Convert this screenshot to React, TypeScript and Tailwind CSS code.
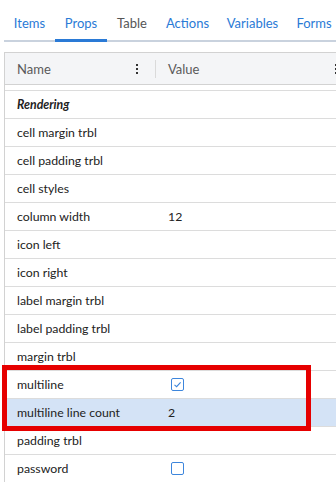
import React from "react";

const rows: { name: string; value?: string; check?: boolean; checked?: boolean; bold?: boolean; selected?: boolean }[] = [
  { name: "Rendering", bold: true },
  { name: "cell margin trbl" },
  { name: "cell padding trbl" },
  { name: "cell styles" },
  { name: "column width", value: "12" },
  { name: "icon left" },
  { name: "icon right" },
  { name: "label margin trbl" },
  { name: "label padding trbl" },
  { name: "margin trbl" },
  { name: "multiline", check: true, checked: true },
  { name: "multiline line count", value: "2", selected: true },
  { name: "padding trbl" },
  { name: "password", check: true, checked: false },
];

const tabs: { label: string; w: string }[] = [
  { label: "Items", w: "w-[51px]" },
  { label: "Props", w: "w-[52px]" },
  { label: "Table", w: "w-[50px]" },
  { label: "Actions", w: "w-[61px]" },
  { label: "Variables", w: "w-[69px]" },
  { label: "Forms", w: "w-[54px]" },
];

function Dots() {
  return (
    <svg width="4" height="12" viewBox="0 0 4 12" className="shrink-0">
      <rect x="1" y="1" width="2" height="2" fill="#333" />
      <rect x="1" y="5" width="2" height="2" fill="#333" />
      <rect x="1" y="9" width="2" height="2" fill="#333" />
    </svg>
  );
}

function Check({ checked }: { checked: boolean }) {
  return (
    <div className="w-[13px] h-[13px] border border-[#3d86dc] rounded-[2px] bg-white flex items-center justify-center">
      {checked && (
        <svg width="9" height="9" viewBox="0 0 9 9">
          <path d="M1.5 4.8 L3.6 6.7 L7.6 2.3" fill="none" stroke="#3d86dc" strokeWidth="1.1" />
        </svg>
      )}
    </div>
  );
}

export default function App() {
  return (
    <div
      className="relative w-[336px] h-[482px] overflow-hidden bg-white text-[12.3px]"
      style={{ fontFamily: '"Segoe UI", Lato, "Noto Sans", sans-serif' }}
    >
      <div className="ml-[4px] h-[42px] flex border-b-2 border-[#c9d2de] text-[13px]">
        {tabs.map((t) => (
          <div
            key={t.label}
            className={
              "shrink-0 h-[42px] flex items-center justify-center whitespace-nowrap " +
              t.w +
              " " +
              (t.label === "Props"
                ? "text-[#2a7ad6] border-b-[3px] border-[#2a7ad6] pt-[9px]"
                : t.label === "Table"
                ? "text-[#555] pt-[6px]"
                : "text-[#2a7ad6] pt-[6px]")
            }
          >
            {t.label}
          </div>
        ))}
      </div>
      <div className="ml-[4px] mt-[10px] w-[360px] border-l border-t border-[#d2d2d2]">
        <div className="h-[32px] flex items-center bg-[#f4f5f7] border-b border-[#d2d2d2] text-[#5a5a5a] text-[13px]">
          <div className="w-[150px] pl-[12px] pr-[16px] flex items-center justify-between">
            <span className="pt-[2px]">Name</span>
            <Dots />
          </div>
          <div className="w-px h-[18px] bg-[#dadada]" />
          <div className="flex-1 pl-[12px] pr-[26px] flex items-center justify-between">
            <span className="pt-[2px]">Value</span>
            <Dots />
          </div>
        </div>
        <div className="mt-[5px] border-t border-[#dcdcdc]">
          {rows.map((r) => (
            <div
              key={r.name}
              className={
                "h-[28px] flex items-center border-b border-[#dcdcdc] text-[#222] " +
                (r.selected ? "bg-[#d4e3f6]" : "bg-white")
              }
            >
              <div
                className={
                  "w-[150px] pl-[12px] pt-[2px] whitespace-nowrap " + (r.bold ? "font-bold italic" : "")
                }
              >
                {r.name}
              </div>
              <div className="flex-1 pl-[13px] flex items-center">
                {r.check ? (
                  <div className="pl-[3px]">
                    <Check checked={!!r.checked} />
                  </div>
                ) : (
                  <span className="pt-[2px]">{r.value}</span>
                )}
              </div>
            </div>
          ))}
        </div>
      </div>
      <div className="absolute left-[2px] top-[365px] w-[309px] h-[66px] border-[5px] border-[#e60000]" />
    </div>
  );
}
